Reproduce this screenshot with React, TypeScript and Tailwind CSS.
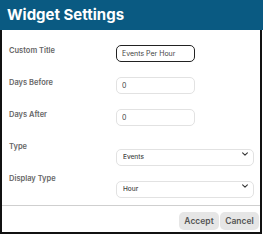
import { useState } from 'react'

const font = { fontFamily: 'Inter, "Liberation Sans", sans-serif' }

function Chevron() {
  return (
    <svg
      viewBox="0 0 10 6"
      className="pointer-events-none absolute right-[6px] top-1/2 h-[4px] w-[6px] -translate-y-1/2"
    >
      <path d="M1 1l4 4 4-4" fill="none" stroke="#333" strokeWidth="1.8" strokeLinecap="round" strokeLinejoin="round" />
    </svg>
  )
}

function Row({ label, children }: { label: string; children: React.ReactNode }) {
  return (
    <div className="grid h-[17px] shrink-0 grid-cols-[107px_1fr] items-start">
      <label className="mt-[1px] text-[7.5px] font-semibold leading-[10px] text-[#666]">{label}</label>
      <div className="flex">{children}</div>
    </div>
  )
}

export default function App() {
  const [title, setTitle] = useState('Events Per Hour')
  const [before, setBefore] = useState('0')
  const [after, setAfter] = useState('0')
  const [type, setType] = useState('Events')
  const [display, setDisplay] = useState('Hour')

  return (
    <div className="h-[234px] w-[263px] bg-white" style={font}>
      <div className="flex h-[234px] w-[262px] flex-col">
        <div className="flex h-[30px] w-[263px] shrink-0 items-center bg-[#0a5a82] pl-[7px]">
          <h1 className="text-[15px] font-bold leading-[20px] text-white">Widget Settings</h1>
        </div>
        <div className="flex flex-1 flex-col border-x-2 border-b-2 border-[#111]">
          <div className="flex shrink-0 flex-col gap-[15px] pl-[7px] pr-[5px] pt-[15px]">
            <Row label="Custom Title">
              <input
                value={title}
                onChange={(e) => setTitle(e.target.value)}
                className="h-[17px] w-[79px] rounded-[5px] border-[1.5px] border-[#222] pl-[5px] text-[7px] text-[#444] outline-none"
              />
            </Row>
            <Row label="Days Before">
              <input
                value={before}
                onChange={(e) => setBefore(e.target.value)}
                className="h-[17px] w-[79px] rounded-[5px] border border-[#e2e2e2] pl-[5px] text-[7px] text-[#444] outline-none"
              />
            </Row>
            <Row label="Days After">
              <input
                value={after}
                onChange={(e) => setAfter(e.target.value)}
                className="h-[17px] w-[79px] rounded-[5px] border border-[#e2e2e2] pl-[5px] text-[7px] text-[#444] outline-none"
              />
            </Row>
            <Row label="Type">
              <div className="relative w-[138px]">
                <select
                  value={type}
                  onChange={(e) => setType(e.target.value)}
                  className="h-[17px] w-full appearance-none rounded-[5px] border border-[#e2e2e2] bg-white pl-[6px] text-[6.5px] font-medium text-[#444] outline-none"
                >
                  <option>Events</option>
                  <option>Alarms</option>
                </select>
                <Chevron />
              </div>
            </Row>
            <Row label="Display Type">
              <div className="relative w-[138px]">
                <select
                  value={display}
                  onChange={(e) => setDisplay(e.target.value)}
                  className="h-[17px] w-full appearance-none rounded-[5px] border border-[#e2e2e2] bg-white pl-[6px] text-[6.5px] font-medium text-[#444] outline-none"
                >
                  <option>Hour</option>
                  <option>Day</option>
                </select>
                <Chevron />
              </div>
            </Row>
          </div>
          <div className="mt-[15px] shrink-0 border-t border-[#cfcfcf]" />
          <div className="flex shrink-0 justify-end gap-[1px] pr-[1px] pt-[6px]">
            <button className="h-[18px] w-[40px] rounded-[5px] bg-[#e6e6e6] text-[8.5px] font-semibold text-[#555]">
              Accept
            </button>
            <button className="h-[18px] w-[39px] rounded-[5px] bg-[#e6e6e6] text-[8.5px] font-semibold text-[#555]">
              Cancel
            </button>
          </div>
        </div>
      </div>
    </div>
  )
}
